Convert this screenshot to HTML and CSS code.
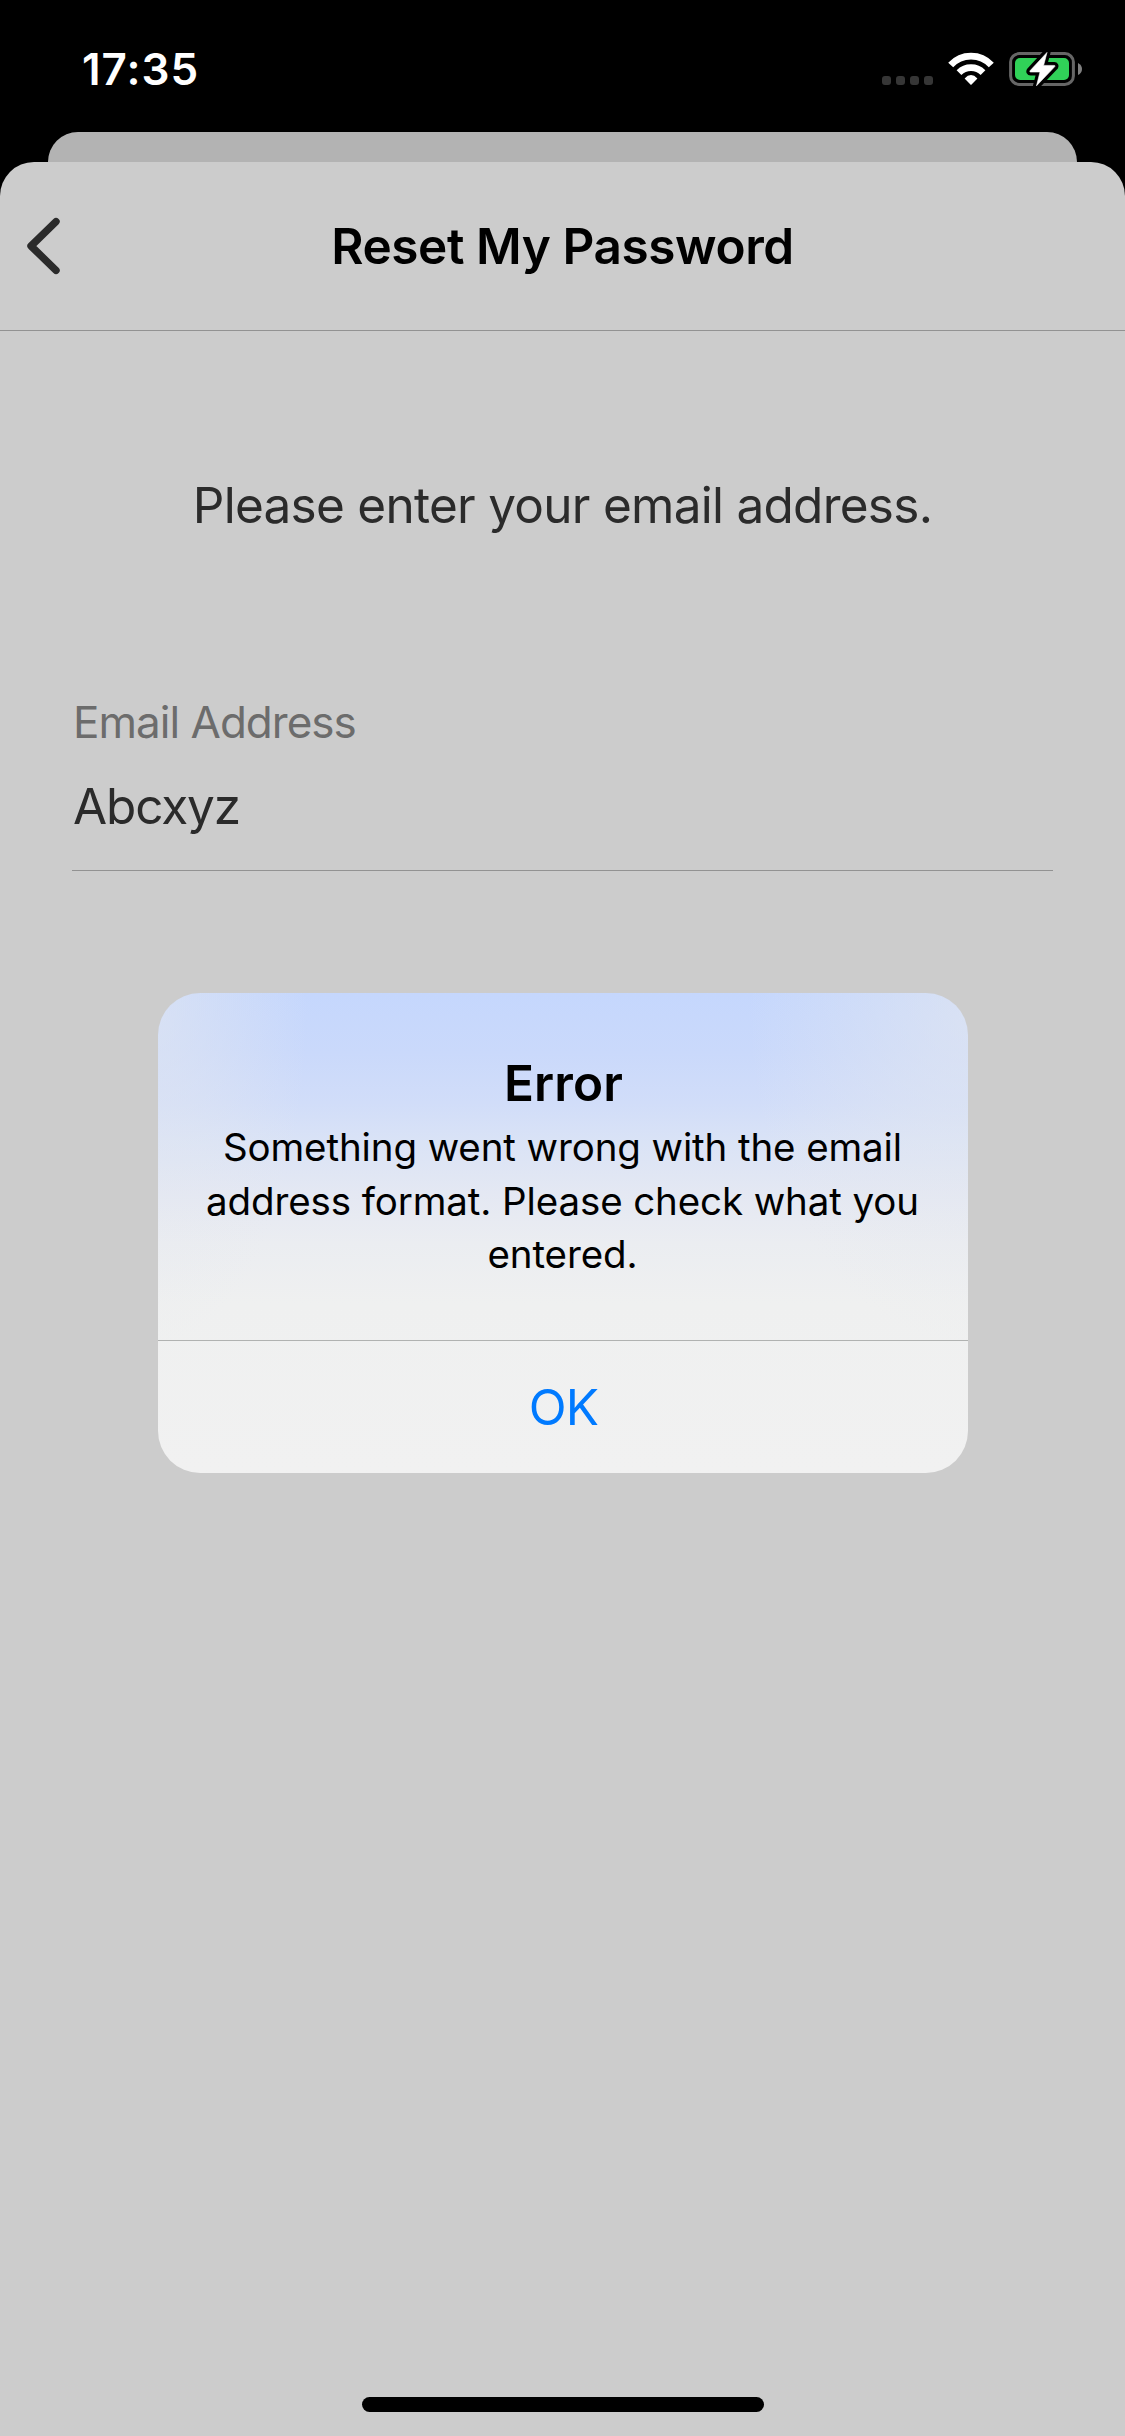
FILE: index.html
```html
<!DOCTYPE html>
<html lang="en">
<head>
<meta charset="utf-8">
<title>Reset My Password</title>
<link rel="stylesheet" href="styles.css">
</head>
<body>
<div class="screen">
  <div class="status-bar">
    <span class="clock">17:35</span>
    <div class="status-icons">
      <svg width="51" height="40" viewBox="0 0 51 40" fill="#363636">
        <rect x="0" y="27" width="9" height="9" rx="3"/>
        <rect x="14" y="27" width="9" height="9" rx="3"/>
        <rect x="28" y="27" width="9" height="9" rx="3"/>
        <rect x="42" y="27" width="9" height="9" rx="3"/>
      </svg>
      <svg width="46" height="40" viewBox="0 0 46 40">
        <path d="M2.7 16A27.6 27.6 0 0 1 43.3 16M11 23.6A17.2 17.2 0 0 1 35 23.6" fill="none" stroke="#fff" stroke-width="6.8"/>
        <path d="M16.6 29.4Q23 22.6 29.4 29.4L23.6 35.4Q23 36 22.4 35.4Z" fill="#fff"/>
      </svg>
      <svg width="74" height="40" viewBox="0 0 74 40">
        <rect x="1.6" y="4.6" width="62.8" height="30.8" rx="8.5" fill="none" stroke="#666" stroke-width="3"/>
        <rect x="6" y="9" width="54" height="22" rx="5" fill="#30d158"/>
        <path d="M69 14Q73 16 73 20Q73 24 69 26Z" fill="#808080"/>
        <path class="bolt-edge" d="M38 3.4L21 21.8Q20.4 23 21.6 23H31L27.5 36.8L45.8 17.6Q46.4 16.4 45.2 16.4H34.6Z"/>
        <path class="bolt" d="M38 3.4L21 21.8Q20.4 23 21.6 23H31L27.5 36.8L45.8 17.6Q46.4 16.4 45.2 16.4H34.6Z"/>
      </svg>
    </div>
  </div>

  <div class="back-sheet"></div>

  <main class="sheet">
    <header class="nav">
      <svg class="back" width="40" height="62" viewBox="0 0 40 62"><path d="M32 6.6L7 31L32 55.4" fill="none" stroke="#2b2b2b" stroke-width="7.4" stroke-linecap="round" stroke-linejoin="round"/></svg>
      <h1 class="title">Reset My Password</h1>
    </header>
    <p class="prompt">Please enter your email address.</p>
    <div class="field">
      <div class="label">Email Address</div>
      <div class="value">Abcxyz</div>
    </div>
    <div class="home-indicator"></div>
  </main>

  <div class="overlay">
    <div class="alert" role="alertdialog">
      <div class="alert-body">
        <h2 class="alert-title">Error</h2>
        <p class="alert-text">Something went wrong with the email<br>address format. Please check what you<br>entered.</p>
      </div>
      <div class="alert-action">OK</div>
    </div>
  </div>
</div>
</body>
</html>
```
FILE: styles.css
```css
* { box-sizing: border-box; }

body {
  margin: 0;
  background: #000;
  font-family: Inter, "Liberation Sans", sans-serif;
}

h1, h2, p { margin: 0; }
svg { display: block; }

.screen {
  position: relative;
  display: flex;
  flex-direction: column;
  width: 1125px;
  height: 2436px;
  overflow: hidden;
  background: #000;
}

.status-bar {
  display: flex;
  flex: none;
  justify-content: space-between;
  align-items: center;
  height: 132px;
  padding: 6px 42px 0 82px;
}

.clock {
  color: #fff;
  font-size: 44px;
  font-weight: 600;
  letter-spacing: 1px;
}

.status-icons { display: flex; gap: 15px; }

.bolt-edge { fill: #000; stroke: #000; stroke-width: 7px; stroke-linejoin: round; }
.bolt { fill: #fff; stroke: #fff; stroke-width: 0.6px; stroke-linejoin: round; }

.back-sheet {
  flex: none;
  height: 30px;
  margin: 0 48px;
  border-radius: 30px 30px 0 0;
  background: #b3b3b3;
}

.sheet {
  display: flex;
  flex: 1;
  flex-direction: column;
  border-radius: 34px 34px 0 0;
  background: #ccc;
}

.nav {
  display: grid;
  grid-template-columns: 58px 1fr 58px;
  align-items: center;
  height: 169px;
  padding: 0 24px;
  border-bottom: 1px solid #929292;
}

.title {
  font-size: 49.5px;
  font-weight: 600;
  letter-spacing: -0.42px;
  line-height: 60px;
  text-align: center;
}

.prompt {
  margin-top: 144px;
  color: #2b2b2b;
  font-size: 49.5px;
  letter-spacing: -0.73px;
  line-height: 60px;
  text-align: center;
}

.field {
  height: 176px;
  margin: 160px 72px 0;
  border-bottom: 1px solid #929292;
}

.label {
  padding-left: 1px;
  color: #6c6c6c;
  font-size: 44px;
  letter-spacing: -0.98px;
  line-height: 54px;
}

.value {
  margin-top: 27px;
  padding-left: 1px;
  color: #2b2b2b;
  font-size: 49.5px;
  letter-spacing: -1.15px;
  line-height: 60px;
}

.home-indicator {
  width: 402px;
  height: 15px;
  margin: auto auto 24px;
  border-radius: 8px;
  background: #000;
}

.overlay {
  position: absolute;
  inset: 0;
  display: grid;
  place-items: center;
  padding-top: 30px;
}

.alert {
  width: 810px;
  height: 480px;
  border-radius: 42px;
  overflow: hidden;
  background:
    radial-gradient(ellipse 150px 330px at 0 20px, rgba(229, 232, 238, .55), rgba(229, 232, 238, 0)),
    radial-gradient(ellipse 220px 330px at 100% 20px, rgba(229, 232, 238, .6), rgba(229, 232, 238, 0)),
    linear-gradient(#c5d7fd 0, #cad9fb 60px, #d1ddf9 110px, #dae3f6 150px, #e4e8f3 200px, #ebedf1 250px, #eff0f0 310px, #f1f1f1 100%);
}

.alert-body {
  height: 348px;
  padding-top: 60px;
  border-bottom: 1px solid #b0b2b1;
  color: #000;
  text-align: center;
}

.alert-title {
  padding-left: 2px;
  font-size: 49.5px;
  font-weight: 600;
  letter-spacing: 0.1px;
  line-height: 60px;
}

.alert-text {
  margin-top: 8px;
  font-size: 38.5px;
  letter-spacing: -0.11px;
  line-height: 53.5px;
}

.alert-action {
  padding-left: 2px;
  color: #007aff;
  font-size: 49.5px;
  letter-spacing: -0.85px;
  line-height: 132px;
  text-align: center;
}
```
